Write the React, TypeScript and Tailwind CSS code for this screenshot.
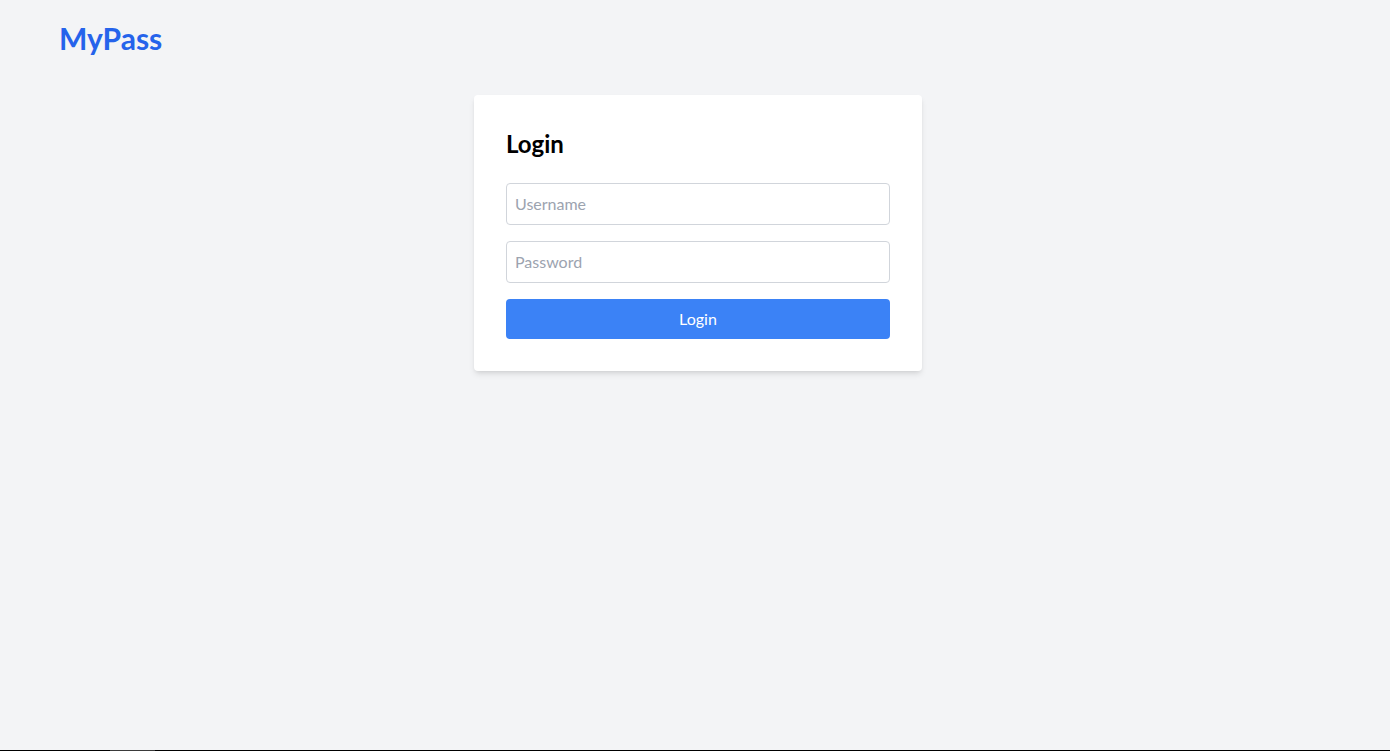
import React from "react";

export default function App() {
  return (
    <div className="flex min-h-screen flex-col bg-[#f3f4f6] font-['Lato',sans-serif]">
      <header className="px-[59px] pb-3 pt-5">
        <h1 className="text-3xl font-bold leading-9 text-[#2563eb]">MyPass</h1>
      </header>
      <main className="flex flex-1 justify-center pl-[6px] pt-[27px]">
        <div className="h-fit w-[448px] rounded bg-white p-8 shadow-md">
          <h2 className="mb-6 pt-px text-2xl font-bold leading-[31px] text-black">Login</h2>
          <form className="flex flex-col gap-4" onSubmit={(e) => e.preventDefault()}>
            <input
              type="text"
              placeholder="Username"
              className="w-full rounded border border-[#d1d5db] px-2 py-2 text-base leading-6 text-gray-900 placeholder:text-[#9ca3af] outline-none"
            />
            <input
              type="password"
              placeholder="Password"
              className="w-full rounded border border-[#d1d5db] px-2 py-2 text-base leading-6 text-gray-900 placeholder:text-[#9ca3af] outline-none"
            />
            <button
              type="submit"
              className="w-full rounded bg-[#3b82f6] py-2 text-base leading-6 text-white"
            >
              Login
            </button>
          </form>
        </div>
      </main>
      <div className="flex h-px bg-black">
        <div className="ml-[110px] h-px w-[45px] bg-[#3a3a3a]" />
      </div>
    </div>
  );
}
